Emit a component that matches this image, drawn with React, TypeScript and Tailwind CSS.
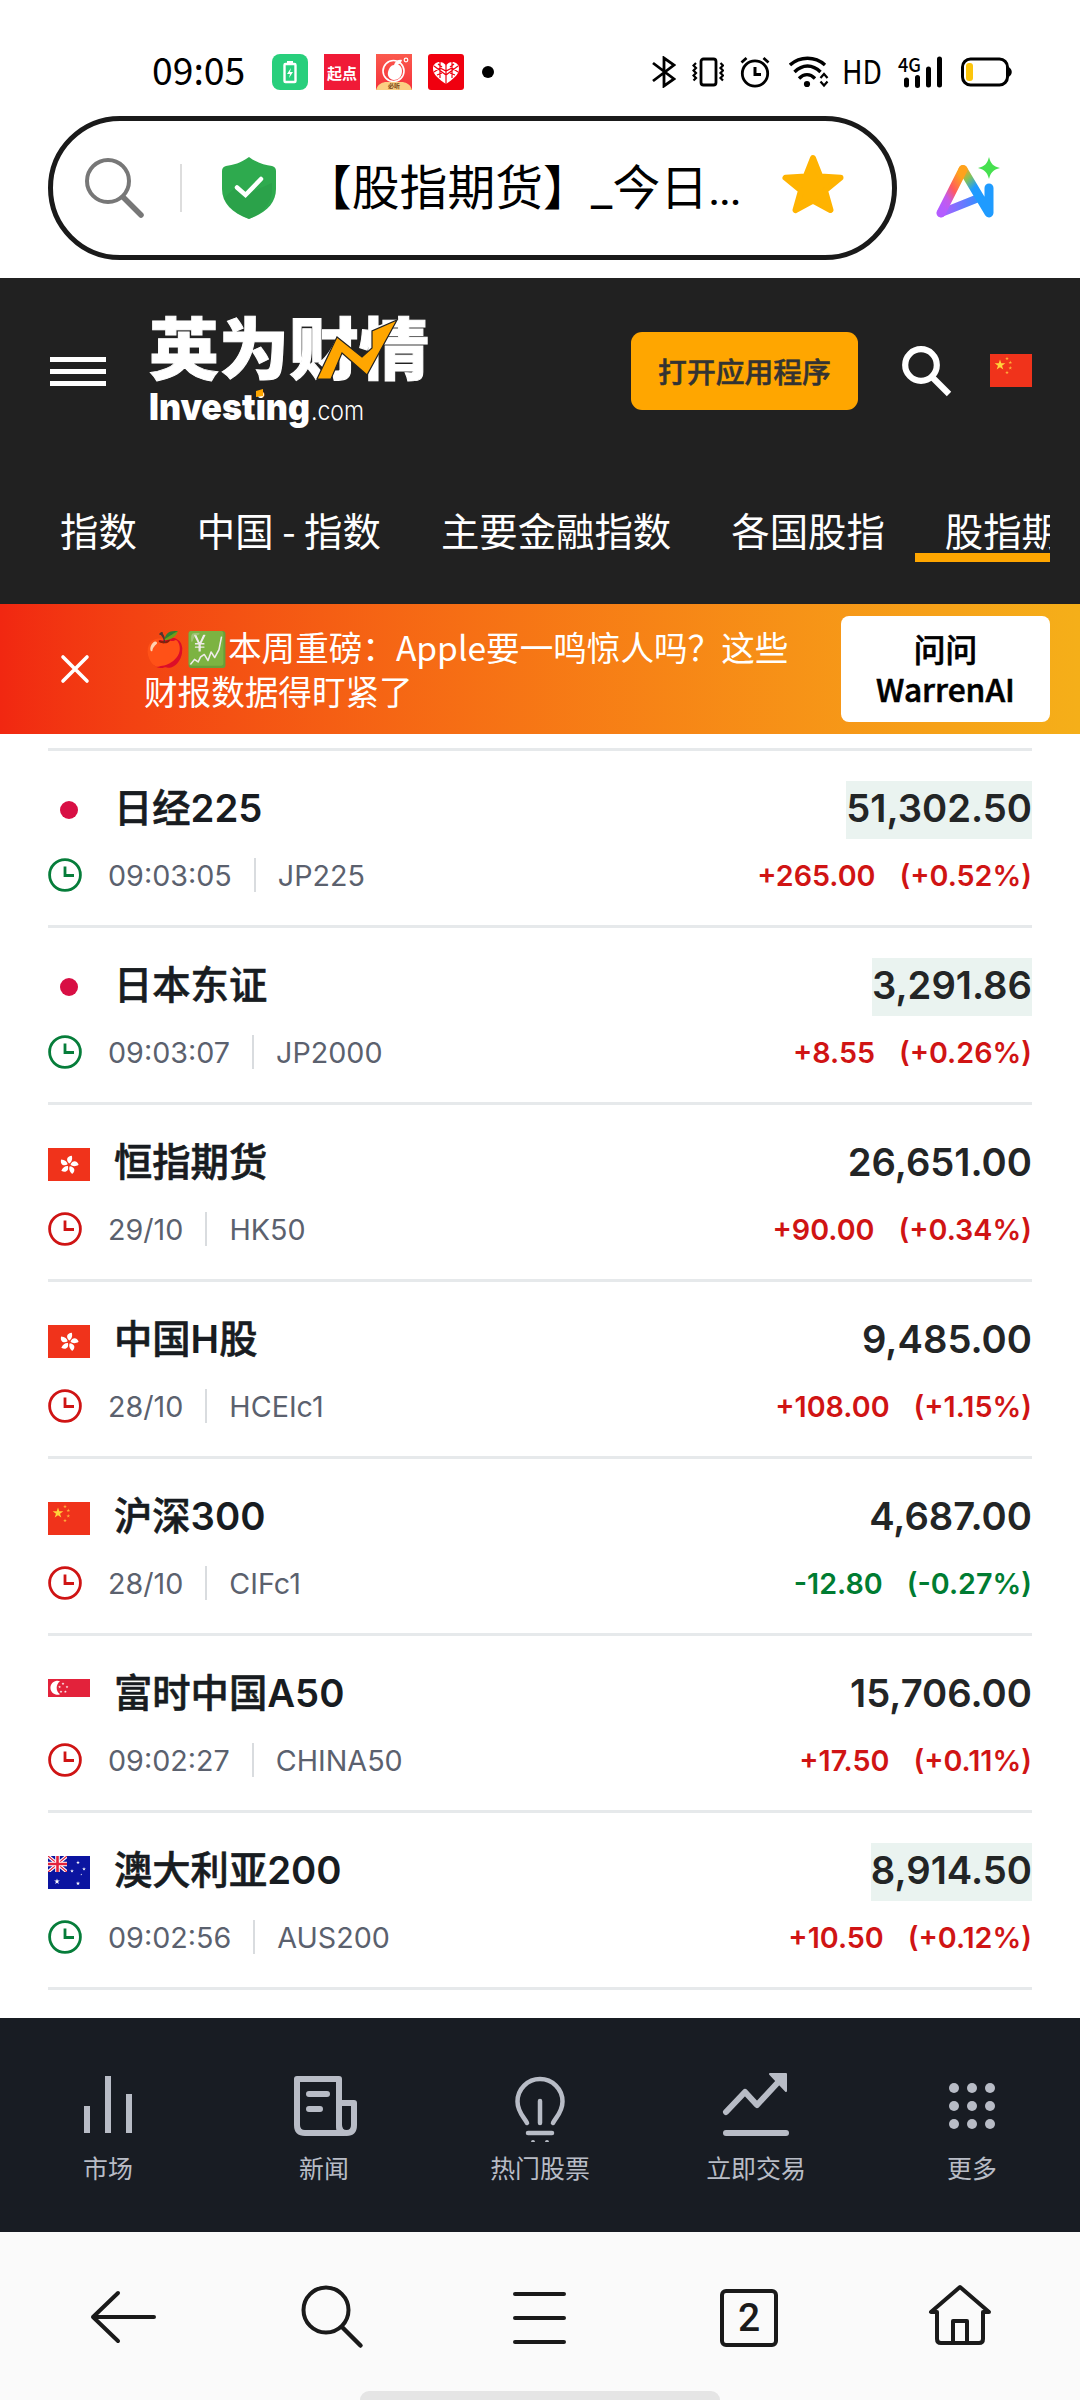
import type { ReactNode } from "react";
import { clsx } from "clsx";

type FlagCode = "jp" | "hk" | "cn" | "sg" | "au";

type Quote = {
  flag: FlagCode;
  name: string;
  time: string;
  symbol: string;
  open: boolean;
  price: string;
  change: string;
  percent: string;
  flash?: boolean;
};

const quotes: Quote[] = [
  { flag: "jp", name: "日经225", time: "09:03:05", symbol: "JP225", open: true, price: "51,302.50", change: "+265.00", percent: "(+0.52%)", flash: true },
  { flag: "jp", name: "日本东证", time: "09:03:07", symbol: "JP2000", open: true, price: "3,291.86", change: "+8.55", percent: "(+0.26%)", flash: true },
  { flag: "hk", name: "恒指期货", time: "29/10", symbol: "HK50", open: false, price: "26,651.00", change: "+90.00", percent: "(+0.34%)" },
  { flag: "hk", name: "中国H股", time: "28/10", symbol: "HCEIc1", open: false, price: "9,485.00", change: "+108.00", percent: "(+1.15%)" },
  { flag: "cn", name: "沪深300", time: "28/10", symbol: "CIFc1", open: false, price: "4,687.00", change: "-12.80", percent: "(-0.27%)" },
  { flag: "sg", name: "富时中国A50", time: "09:02:27", symbol: "CHINA50", open: false, price: "15,706.00", change: "+17.50", percent: "(+0.11%)" },
  { flag: "au", name: "澳大利亚200", time: "09:02:56", symbol: "AUS200", open: true, price: "8,914.50", change: "+10.50", percent: "(+0.12%)", flash: true },
];

const STAR = "M0-1 .2245-.309 .951-.309 .363.118 .588.809 0 .382-.588.809-.363.118-.951-.309-.2245-.309Z";

function Star({ x, y, r, fill }: { x: number; y: number; r: number; fill: string }) {
  return <path d={STAR} fill={fill} transform={`translate(${x} ${y}) scale(${r})`} />;
}

function Flag({ code }: { code: FlagCode }) {
  return (
    <svg width="42" height="33" viewBox="0 0 42 33" className="shrink-0">
      {code === "jp" && <circle cx="21" cy="16" r="9" fill="#d80f44" />}
      {code === "hk" && (
        <>
          <rect width="42" height="33" fill="#f0331b" />
          {[8, 80, 152, 224, 296].map((a) => (
            <path key={a} d="M0-1.5C-4-4-3.500-8.500 1.500-9.500 3-6 2-3 0-1.500Z" fill="#fff" transform={`translate(21 17) rotate(${a})`} />
          ))}
        </>
      )}
      {code === "cn" && (
        <>
          <rect width="42" height="33" fill="#f0331b" />
          <Star x={10} y={11} r={5.6} fill="#ffd43b" />
          <Star x={17} y={4.5} r={2} fill="#ffb13b" />
          <Star x={20.3} y={8.5} r={2} fill="#ffb13b" />
          <Star x={20.3} y={14} r={2} fill="#ffb13b" />
          <Star x={17} y={18.5} r={2} fill="#ffb13b" />
        </>
      )}
      {code === "sg" && (
        <>
          <rect width="42" height="18" fill="#e3223b" />
          <path d="M12 2.3A7 7 0 1 0 12 15.3 8 8 0 0 1 12 2.3Z" fill="#fff" />
          <Star x={15} y={4.7} r={1.5} fill="#fff" />
          <Star x={11.6} y={8} r={1.5} fill="#fff" />
          <Star x={19} y={8} r={1.5} fill="#fff" />
          <Star x={13} y={12.7} r={1.5} fill="#fff" />
          <Star x={17.4} y={12.7} r={1.5} fill="#fff" />
        </>
      )}
      {code === "au" && (
        <>
          <rect width="42" height="33" fill="#0b14a0" />
          <svg width="19" height="16" viewBox="0 0 19 16">
            <path d="M0 0l19 16M19 0L0 16" stroke="#fff" strokeWidth="3.4" />
            <path d="M0 0l19 16M19 0L0 16" stroke="#e3223b" strokeWidth="1.2" />
            <path d="M9.5 0v16M0 8h19" stroke="#fff" strokeWidth="4.6" />
            <path d="M9.5 0v16M0 8h19" stroke="#e3223b" strokeWidth="2.6" />
          </svg>
          <Star x={9} y={25.5} r={3} fill="#fff" />
          <Star x={30} y={6.5} r={2} fill="#fff" />
          <Star x={24} y={15} r={2} fill="#fff" />
          <Star x={36} y={13} r={2} fill="#fff" />
          <Star x={33.3} y={18.5} r={1} fill="#fff" />
          <Star x={30} y={27.5} r={2.2} fill="#fff" />
        </>
      )}
    </svg>
  );
}

function Clock({ open }: { open: boolean }) {
  return (
    <svg width="34" height="34" viewBox="0 0 34 34" fill="none" strokeWidth="2.8" className={open ? "stroke-[#067d3a]" : "stroke-[#cf1414]"}>
      <circle cx="17" cy="17" r="15.4" />
      <path d="M17 8.5v9h9" />
    </svg>
  );
}

function StatusBar() {
  return (
    <div className="flex h-[116px] items-center pt-7 pr-[68px] pl-[152px] text-black">
      <span className="mt-[-4px] w-[120px] text-[37.300px] leading-none">09:05</span>
      <div className="flex items-center gap-4">
        <svg width="36" height="36" viewBox="0 0 36 36">
          <rect width="36" height="36" rx="8" fill="#28cf7c" />
          <path d="M15 7h6v2h-6z" fill="#fff" />
          <rect x="12.5" y="10" width="11" height="18" rx="1" fill="none" stroke="#fff" strokeWidth="2.4" />
          <path d="M19 14l-4 6h3l-1 4 4-6h-3z" fill="#fff" />
        </svg>
        <div className="flex size-9 items-center justify-center bg-[#f01a37] text-[15px] leading-none font-bold text-white">起点</div>
        <svg width="36" height="36" viewBox="0 0 36 36">
          <defs>
            <linearGradient id="peach" x1="0" y1="0" x2="0" y2="1">
              <stop offset="0" stopColor="#fb5a4e" />
              <stop offset="1" stopColor="#f5303a" />
            </linearGradient>
          </defs>
          <rect width="36" height="36" fill="url(#peach)" />
          <circle cx="17.5" cy="17" r="10.5" fill="none" stroke="#fff" strokeWidth="1.6" />
          <path d="M18 11c3-2 8 0 8 6s-4 9-8 9-7-4-6-8 3-7 6-7ZM18 11c1-4 5-6 8-5-1 4-4 5-8 5Z" fill="#fff" />
          <circle cx="30" cy="6" r="1.8" fill="none" stroke="#fff" strokeWidth="1.2" />
          <path d="M0 36c2-6 5-7 9-8h18c4 1 7 2 9 8Z" fill="#fbcf83" />
          <text x="18" y="34" fontSize="6" fontWeight="700" textAnchor="middle" fill="#7a4a1c">必听</text>
        </svg>
        <svg width="36" height="36" viewBox="0 0 36 36">
          <rect width="36" height="36" rx="3" fill="#f0000f" />
          <path d="M18 30C11 25 5 21 5 14.500c0-7 9-9 13-3 4-6 13-4 13 3C31 21 25 25 18 30Z" fill="#fff" />
          <path d="M18 11v19M12 8v16M24 8v16M6 12l12 9 12-9M6 18l6-4 6 3 6-3 6 4M10 10l4 3M26 10l-4 3M9 21l5-2M27 21l-5-2" fill="none" stroke="#f0000f" strokeWidth="1.2" />
        </svg>
        <span className="ml-0.5 size-3 rounded-full bg-black" />
      </div>

      <div className="ml-auto flex items-center">
        <svg width="24" height="32" viewBox="0 0 24 32" fill="none" stroke="#000" strokeWidth="2.8">
          <path d="M1 7l21 16-10 7V2l10 7L1 25" />
        </svg>
        <svg width="32" height="32" viewBox="0 0 32 32" fill="none" stroke="#000" className="ml-4">
          <rect x="9" y="3" width="15" height="26" rx="2.500" strokeWidth="2.800" />
          <path d="M4 7L1.500 9.500 4 12 1.500 14.500 4 17 1.500 19.500 4 22 1.500 24.500M28.500 7L31 9.500 28.500 12 31 14.500 28.500 17 31 19.500 28.500 22 31 24.500" strokeWidth="2.200" />
        </svg>
        <svg width="30" height="32" viewBox="0 0 30 32" fill="none" stroke="#000" className="ml-4">
          <circle cx="15" cy="17.500" r="12.700" strokeWidth="2.800" />
          <path d="M15 11v7.500h6" strokeWidth="3" />
          <path d="M1.500 6.500l5-4.500M28.500 6.500l-5-4.500" strokeWidth="2.800" />
        </svg>
        <svg width="40" height="32" viewBox="0 0 40 32" fill="none" stroke="#000" strokeWidth="3.400" className="ml-[19px]">
          <path d="M1 9c10-9 25-9 35 0M5.500 16c8-8 18-8 26 0M10 22.500c5-5 11-5 16 0" />
          <circle cx="18" cy="28" r="3.100" fill="#000" stroke="none" />
          <path d="M31.500 22l3.500-4 3.500 4M31.500 25.500l3.500 4 3.500-4" strokeWidth="2.200" />
        </svg>
        <svg width="38" height="32" viewBox="0 0 38 32" className="ml-[15px] overflow-visible">
          <text x="-2" y="28" fontSize="33" textLength="40" lengthAdjust="spacingAndGlyphs">HD</text>
        </svg>
        <svg width="46" height="34" viewBox="0 0 46 34" className="ml-[16px] overflow-visible">
          <text x="0" y="16.500" fontSize="19" fontWeight="500" textLength="23" lengthAdjust="spacingAndGlyphs">4G</text>
          <path d="M8.500 25v5M19.500 22.500v8M30.500 14v16M41.500 4v26" stroke="#000" strokeWidth="5" strokeLinecap="round" />
        </svg>
        <svg width="51" height="30" viewBox="0 0 51 30" className="ml-[17px]">
          <rect x="1.500" y="2" width="45" height="26" rx="8" fill="none" stroke="#000" strokeWidth="3" />
          <rect x="5" y="6" width="7" height="18" rx="3" fill="#fcc50c" />
          <path d="M47 9.500c5 3 5 8 0 11Z" />
        </svg>
      </div>
    </div>
  );
}

function AddressBar() {
  return (
    <div className="flex h-[162px] items-start pl-12">
      <div className="flex h-36 w-[849px] items-center rounded-full border-5 border-[#1a1a1a] pl-[32px]">
        <svg width="60" height="62" viewBox="0 0 60 62" fill="none" stroke="#777">
          <circle cx="23" cy="24" r="21" strokeWidth="4" />
          <path d="M38.500 40.500L56 58" strokeWidth="5.500" strokeLinecap="round" />
        </svg>
        <span className="ml-[35px] h-12 w-0.5 bg-[#ddd]" />
        <svg width="54" height="62" viewBox="0 0 54 62" className="ml-[40px]">
          <path d="M27 0C19 6 11 8 4 9Q0 10 0 14v18c0 14 10 24 27 30 17-6 27-16 27-30V14q0-4-4-5C43 8 35 6 27 0Z" fill="#2eaa4e" />
          <path d="M14 30l9 8 27-12v8c-1 13-9 22-23 28C14 57 6 49 2 41Z" fill="#279a46" opacity=".5" />
          <path d="M15 30.500l8.500 7.500 15.500-16" fill="none" stroke="#fff" strokeWidth="4.500" strokeLinecap="round" />
        </svg>
        <span className="mt-[-1px] ml-[28px] w-[450px] text-[47.800px] leading-none whitespace-nowrap text-black">
          【股指期货】<span className="font-['Roboto']">_</span>今日<span className="font-['Roboto'] tracking-[-1.800px]">...</span>
        </span>
        <svg width="62" height="62" viewBox="0 0 62 62" className="mt-[-6px] ml-[28px]">
          <path d="M31 4l7.300 18.500 20.200 1.300L43 36.500 48.500 56 31 46.500 13.500 56 19 36.500 3.500 23.800l20.200-1.300Z" fill="#ffb300" stroke="#ffb300" strokeWidth="6" strokeLinejoin="round" />
        </svg>
      </div>
      <svg width="66" height="66" viewBox="0 0 66 66" className="mt-[39px] ml-[39px]">
        <defs>
          <linearGradient id="aiLeft" x1="0" y1="1" x2=".8" y2="0">
            <stop offset="0.1" stopColor="#b45cff" />
            <stop offset=".35" stopColor="#c65ae8" />
            <stop offset=".6" stopColor="#ff5a5f" />
            <stop offset=".95" stopColor="#ffa21c" />
          </linearGradient>
          <linearGradient id="aiRight" x1="0" y1="0" x2=".6" y2="1">
            <stop offset="0" stopColor="#ffa21c" />
            <stop offset=".25" stopColor="#7fc35c" />
            <stop offset=".5" stopColor="#1f9bff" />
            <stop offset="1" stopColor="#1f9bff" />
          </linearGradient>
          <linearGradient id="aiBase" x1="0" y1="0" x2="1" y2="0">
            <stop offset="0" stopColor="#b45cff" />
            <stop offset="1" stopColor="#3d8bff" />
          </linearGradient>
        </defs>
        <g fill="none" strokeWidth="9" strokeLinecap="round" strokeLinejoin="round">
          <path d="M5 58L40 44" stroke="url(#aiBase)" strokeWidth="8" />
          <path d="M27 14.500L53 58V33" stroke="url(#aiRight)" />
          <path d="M5 58L27 14.500" stroke="url(#aiLeft)" />
        </g>
        <path d="M53 2c2 7 4 9 11 11-7 2-9 4-11 11-2-7-4-9-11-11 7-2 9-4 11-11Z" fill="#46e04f" />
      </svg>
    </div>
  );
}

function Logo() {
  return (
    <svg width="282" height="116" viewBox="0 0 282 116" className="ml-[42px] overflow-visible">
      <text x="1" y="60.500" fontSize="67" fontWeight="900" fill="#fff" stroke="#fff" strokeWidth="1" textLength="280" lengthAdjust="spacingAndGlyphs">
        英为财情
      </text>
      <path
        d="M169 66h14l11-26 25 22L249 7l-25 11v17l-10 9-25-20Z"
        fill="#ffa600"
        stroke="#212121"
        strokeWidth="1.200"
      />
      <g style={{ fontFamily: "Inter" }}>
        <text x="1" y="107" fontSize="37" fontWeight="900" fill="#fff" textLength="161" lengthAdjust="spacingAndGlyphs">Investing</text>
        <text x="163" y="107" fontSize="26" fontWeight="300" fill="#fff" textLength="53" lengthAdjust="spacingAndGlyphs">.com</text>
      </g>
      <path d="M108 78l7-2v7l-7 1Z" fill="#ffa600" />
    </svg>
  );
}

const tabs = ["指数", "中国 - 指数", "主要金融指数", "各国股指", "股指期货"];

function SiteHeader() {
  return (
    <header className="h-[326px] bg-[#212121] text-white">
      <div className="flex h-[186px] items-center pl-[50px]">
        <div className="flex flex-col gap-[7px]">
          <span className="h-[5px] w-14 bg-white" />
          <span className="h-[5px] w-14 bg-white" />
          <span className="h-[5px] w-14 bg-white" />
        </div>
        <Logo />
        <button className="ml-[201px] h-[78px] w-[227px] rounded-[11px] bg-[#ffa600] text-[28.800px] font-medium text-[#333] [-webkit-text-stroke:0.5px]">
          打开应用程序
        </button>
        <svg width="52" height="54" viewBox="0 0 52 54" fill="none" stroke="#fff" className="ml-[42px]">
          <circle cx="21" cy="21" r="15.800" strokeWidth="6.200" />
          <path d="M32 33l17 17" strokeWidth="6.200" />
        </svg>
        <div className="ml-[38px] pb-0.5">
          <Flag code="cn" />
        </div>
      </div>
      <nav className="mr-[30px] ml-[30px] flex overflow-hidden pt-[33px]">
        {tabs.map((tab, i) => (
          <a
            key={tab}
            className={clsx(
              "h-[65px] shrink-0 border-b-9 px-[30px] text-[38.400px] leading-[65px] whitespace-nowrap",
              i === 4 ? "border-[#ffa600]" : "border-transparent",
            )}
          >
            {tab}
          </a>
        ))}
      </nav>
    </header>
  );
}

function PromoBanner() {
  return (
    <section className="flex h-[130px] items-center bg-linear-to-r from-[#f12711] to-[#f5af19] pr-[30px] pl-[60px]">
      <svg width="30" height="30" viewBox="0 0 30 30" stroke="#fff" strokeWidth="3.600" strokeLinecap="round">
        <path d="M3 3l24 24M27 3L3 27" />
      </svg>
      <p className="ml-[54px] w-[660px] text-[33.600px] leading-[44.500px] whitespace-nowrap text-white">
        🍎💹本周重磅：Apple要一鸣惊人吗？这些
        <br />
        财报数据得盯紧了
      </p>
      <button className="ml-auto h-[106px] w-[209px] rounded-lg bg-white pb-0.5 text-[31.700px] leading-10 font-medium text-black [-webkit-text-stroke:0.6px]">
        问问
        <br />
        WarrenAI
      </button>
    </section>
  );
}

// Han characters run one weight lighter than the Latin part of a name
function QuoteName({ name }: { name: string }) {
  return (
    <span className="mt-[-2px] ml-[24px] text-[38.300px] text-[#181c21]">
      {name.split(/([A-Z0-9]+)/).map((part, i) => (
        <span key={i} className={i % 2 === 0 ? "font-medium [-webkit-text-stroke:0.6px]" : "font-semibold"}>
          {part}
        </span>
      ))}
    </span>
  );
}

function QuoteRow({ quote }: { quote: Quote }) {
  return (
    <li className="h-[177px] border-t-3 border-[#e6e9eb] pt-[30px]">
      <div className="flex h-[58px] items-center">
        <Flag code={quote.flag} />
        <QuoteName name={quote.name} />
        <span className={clsx("ml-auto h-[58px] text-[38.200px] leading-[54px] font-semibold text-[#232526]", quote.flash && "bg-[#eaf3f0]")}>
          {quote.price}
        </span>
      </div>
      <div className="mt-[19px] flex h-[34px] items-center text-[28.700px] text-[#5b616e]">
        <Clock open={quote.open} />
        <span className="mt-0.5 ml-[26px]">{quote.time}</span>
        <span className="mx-[22px] h-[34px] w-0.5 bg-[#d9dcdf]" />
        <span className="mt-0.5">{quote.symbol}</span>
        <span className={clsx("mt-0.5 ml-auto flex gap-6 font-semibold", quote.change.startsWith("-") ? "text-[#007c32]" : "text-[#d01414]")}>
          <span>{quote.change}</span>
          <span>{quote.percent}</span>
        </span>
      </div>
    </li>
  );
}

function NavItem({ label, children }: { label: string; children: ReactNode }) {
  return (
    <a className="flex flex-1 flex-col items-center">
      <svg width="72" height="72" viewBox="0 0 72 72" fill="none" stroke="#b8bcc6" strokeWidth="6" className="overflow-visible">
        {children}
      </svg>
      <span className="mt-[12px] text-[24.900px] leading-[30px] text-[#b8bcc6]">{label}</span>
    </a>
  );
}

function SiteNav() {
  return (
    <nav className="flex h-[214px] bg-[#181c23] pt-[50px]">
      <NavItem label="市场">
        <path d="M15 38v27M36 8v57M57 26v39" />
      </NavItem>
      <NavItem label="新闻">
        <path d="M9 11h42v46q0 8 5 8H17q-8 0-8-8Z" strokeLinejoin="round" />
        <path d="M51 35h15v22q0 8-7.500 8T51 57" strokeLinejoin="round" />
        <path d="M21 26h18M21 41h11" strokeLinecap="round" />
      </NavItem>
      <NavItem label="热门股票">
        <path d="M23 55c-3-6-9.500-11-9.500-21.500a22.500 22.500 0 0 1 45 0c0 10.500-6.500 15.500-9.500 21.500" strokeWidth="4.500" strokeLinecap="round" />
        <path d="M36 33v22" strokeWidth="4.500" strokeLinecap="round" />
        <path d="M24 65h24" strokeWidth="4.500" strokeLinecap="round" />
        <path d="M27 74a2 2 0 0 1 4 0M41 74a2 2 0 0 1 4 0" fill="#b8bcc6" stroke="none" />
      </NavItem>
      <NavItem label="立即交易">
        <path d="M6 44l19-20 12 13 25-27" strokeLinecap="round" strokeLinejoin="round" />
        <path d="M50 6h16v17Z" fill="#b8bcc6" strokeWidth="2" strokeLinejoin="round" />
        <path d="M6 65h60" strokeLinecap="round" />
      </NavItem>
      <NavItem label="更多">
        <g fill="#b8bcc6" stroke="none">
          {[20, 38, 56].map((cy) => [18, 36, 54].map((cx) => <circle key={`${cx}-${cy}`} cx={cx} cy={cy} r="5" />))}
        </g>
      </NavItem>
    </nav>
  );
}

function BrowserToolbar() {
  return (
    <footer className="flex h-[168px] flex-col items-center justify-between bg-[#fafafa]">
      <div className="flex w-full items-center justify-between pt-[50px] pr-[85px] pl-[87px]">
        <svg width="72" height="72" viewBox="0 0 72 72" fill="none" stroke="#1a1a1a" strokeWidth="4" strokeLinecap="round" strokeLinejoin="round">
          <path d="M67 35H6M31 11L6 35l25 24" />
        </svg>
        <svg width="72" height="72" viewBox="0 0 72 72" fill="none" stroke="#1a1a1a" strokeWidth="4" strokeLinecap="round">
          <circle cx="30" cy="28" r="22.500" />
          <path d="M46 45l18.500 18.500" strokeWidth="4.500" />
        </svg>
        <svg width="72" height="72" viewBox="0 0 72 72" fill="none" stroke="#1a1a1a" strokeWidth="4" strokeLinecap="round">
          <path d="M10 12h49M10 36h49M10 60h49" />
        </svg>
        <div className="flex size-[72px] items-center pl-[6px]">
          <span className="flex size-[58px] items-center justify-center rounded-[6px] border-4 border-[#1a1a1a] font-['Roboto'] text-[39px] leading-none font-medium text-[#1a1a1a]">
            2
          </span>
        </div>
        <svg width="72" height="72" viewBox="0 0 72 72" fill="none" stroke="#1a1a1a" strokeWidth="4" strokeLinecap="round" strokeLinejoin="round">
          <path d="M14 30v27q0 4 4 4h38q4 0 4-4V30h6L37 5 8 30h6" />
          <path d="M30 60V39h14v21" />
        </svg>
      </div>
      <span className="h-[9px] w-[360px] rounded-t-full bg-[#e5e5e5]" />
    </footer>
  );
}

export default function App() {
  return (
    <div className="flex h-[2400px] w-[1080px] flex-col overflow-hidden bg-white font-['Noto_Sans_CJK_SC',sans-serif]">
      <StatusBar />
      <AddressBar />
      <SiteHeader />
      <PromoBanner />
      <ul className="grow px-12 pt-[14px] font-['Inter','Noto_Sans_CJK_SC',sans-serif]">
        {quotes.map((quote) => (
          <QuoteRow key={quote.name} quote={quote} />
        ))}
        <li className="border-t-3 border-[#e6e9eb]" />
      </ul>
      <SiteNav />
      <BrowserToolbar />
    </div>
  );
}
